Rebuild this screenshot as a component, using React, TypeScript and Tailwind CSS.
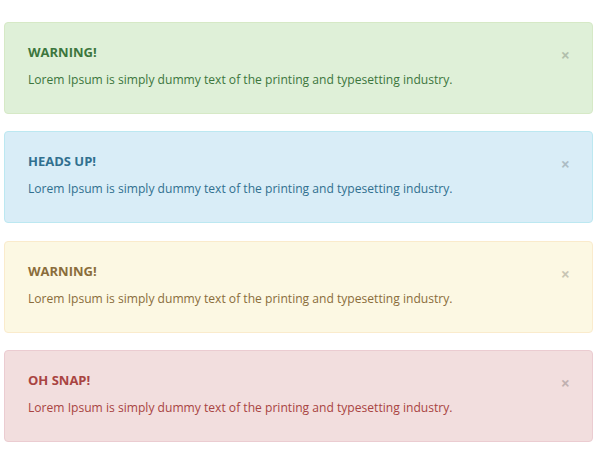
const alerts = [
  {
    title: 'Warning!',
    box: 'bg-[#dff0d8] border-[#d6e9c6] text-[#3c763d]',
  },
  {
    title: 'Heads up!',
    box: 'bg-[#d9edf7] border-[#bce8f1] text-[#31708f]',
  },
  {
    title: 'Warning!',
    box: 'bg-[#fcf8e3] border-[#faebcc] text-[#8a6d3b]',
  },
  {
    title: 'Oh snap!',
    box: 'bg-[#f2dede] border-[#ebccd1] text-[#a94442]',
  },
]

export default function App() {
  return (
    <div
      className="flex min-h-[462px] flex-col gap-[17.33px] bg-white pt-[22px] pr-[7px] pl-[4px]"
      style={{ fontFamily: '"Open Sans", sans-serif' }}
    >
      {alerts.map((alert, i) => (
        <div
          key={i}
          className={`flex h-[92px] items-start justify-between rounded-[4px] border pt-[20px] pr-[22px] pl-[23px] ${alert.box}`}
        >
          <div>
            <h4 className="text-[13px] leading-[18px] font-bold uppercase">
              {alert.title}
            </h4>
            <p className="mt-[10px] text-[12.1px] leading-[18px]">
              Lorem Ipsum is simply dummy text of the printing and typesetting industry.
            </p>
          </div>
          <button
            type="button"
            className="mt-[4px] text-[16px] leading-none font-bold text-black opacity-20"
          >
            ×
          </button>
        </div>
      ))}
    </div>
  )
}
